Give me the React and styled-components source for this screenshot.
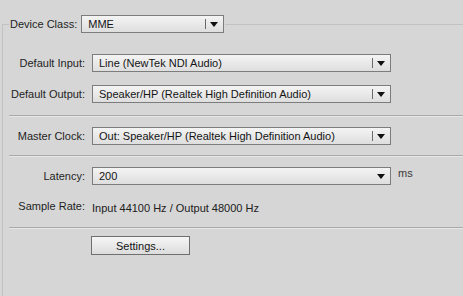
import React from 'react';
import styled, { createGlobalStyle } from 'styled-components';

const GlobalStyle = createGlobalStyle`
  html, body {
    margin: 0;
    padding: 0;
    background: #d6d6d6;
  }
  body {
    font-family: "Liberation Sans", Arial, sans-serif;
    font-size: 11px;
    color: #1e1e1e;
  }
`;

const Page = styled.div`
  width: 463px;
  height: 296px;
  overflow: hidden;
  background: #d6d6d6;
  padding: 15px 0 0 2px;
  box-sizing: border-box;
`;

const Group = styled.fieldset`
  margin: 0;
  padding: 0 0 60px 0;
  width: 500px;
  border: 1px solid #c2c2c2;
  border-right: none;
  min-width: 0;
`;

const Legend = styled.legend`
  margin-left: 6px;
  padding: 0 1px;
  display: flex;
  align-items: center;
  gap: 4px;
`;

const Label = styled.span`
  white-space: nowrap;
  line-height: 18px;
  text-align: ${p => (p.$left ? 'left' : 'right')};
`;

const Grid = styled.div`
  display: grid;
  grid-template-columns: 82px 299px auto;
  column-gap: 7px;
  align-items: center;
  padding-top: ${p => p.$top || 0}px;
  row-gap: ${p => p.$gap || 0}px;
`;

const Select = styled.div`
  position: relative;
  width: ${p => p.$width || 299}px;
  height: 18px;
  box-sizing: border-box;
  border: 1px solid #7c7c7c;
  background: linear-gradient(#f4f4f4, #dedede);
  display: flex;
  align-items: center;
  padding-left: 6px;
  white-space: nowrap;
  color: #141414;
`;

const Divider = styled.span`
  position: absolute;
  right: 17px;
  top: 3px;
  bottom: 3px;
  width: 1px;
  background: #6a6a6a;
`;

const Arrow = styled.span`
  position: absolute;
  right: 5px;
  top: 6px;
  width: 0;
  height: 0;
  border-left: 4px solid transparent;
  border-right: 4px solid transparent;
  border-top: 5px solid #111;
`;

const Separator = styled.div`
  margin: ${p => p.$mt || 0}px 0 0 6px;
  height: 1px;
  background: #a9a9a9;
  border-bottom: 1px solid #e6e6e6;
`;

const Unit = styled.span`
  color: #3a3a3a;
  line-height: 18px;
  position: relative;
  top: -3px;
`;

const Value = styled.span`
  color: #202020;
  position: relative;
  top: 2px;
`;

const Button = styled.button`
  margin: 7px 0 0 88px;
  width: 99px;
  height: 19px;
  box-sizing: border-box;
  border: 1px solid #6f6f6f;
  background: linear-gradient(#f6f6f6, #dcdcdc);
  font-family: inherit;
  font-size: 11px;
  color: #141414;
  padding: 0;
  display: block;
`;

function Dropdown({ value, width, noDivider }) {
  return (
    <Select $width={width}>
      {value}
      {!noDivider && <Divider />}
      <Arrow />
    </Select>
  );
}

export default function App() {
  return (
    <>
      <GlobalStyle />
      <Page>
        <Group>
          <Legend>
            <Label $left>Device Class:</Label>
            <Dropdown value="MME" width={143} />
          </Legend>
          <Grid $top={21} $gap={13}>
            <Label>Default Input:</Label>
            <Dropdown value="Line (NewTek NDI Audio)" />
            <span />
            <Label>Default Output:</Label>
            <Dropdown value="Speaker/HP (Realtek High Definition Audio)" />
            <span />
          </Grid>
          <Separator $mt={12} />
          <Grid $top={10}>
            <Label>Master Clock:</Label>
            <Dropdown value="Out: Speaker/HP (Realtek High Definition Audio)" />
            <span />
          </Grid>
          <Separator $mt={10} />
          <Grid $top={10} $gap={12}>
            <Label>Latency:</Label>
            <Dropdown value="200" noDivider />
            <Unit>ms</Unit>
            <Label>Sample Rate:</Label>
            <Value>Input 44100 Hz / Output 48000 Hz</Value>
            <span />
          </Grid>
          <Separator $mt={12} />
          <Button>Settings...</Button>
        </Group>
      </Page>
    </>
  );
}
